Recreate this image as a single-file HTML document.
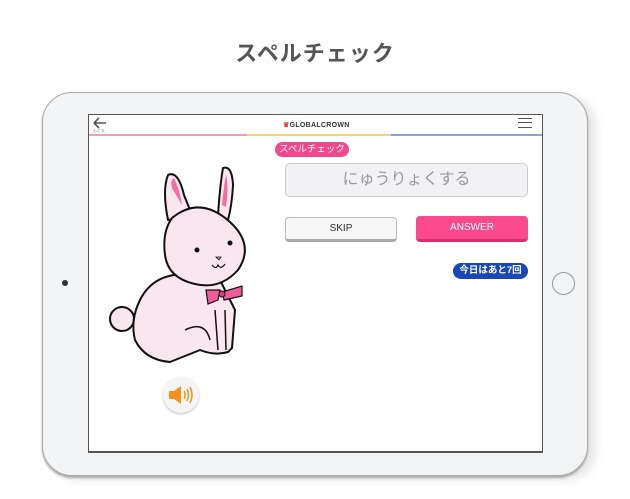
<!DOCTYPE html>
<html><head><meta charset="utf-8"><style>
*{margin:0;padding:0;box-sizing:border-box}
body{width:630px;height:499px;background:#fff;position:relative;overflow:hidden;font-family:"Liberation Sans","Noto Sans CJK JP",sans-serif}
.a{position:absolute}
</style></head><body>
<div class="a" style="left:0;top:36px;width:630px;text-align:center;font-size:22px;font-weight:bold;color:#555;letter-spacing:1px">スペルチェック</div>
<div class="a" style="left:42px;top:92px;width:546px;height:384px;border-radius:30px;background:#f3f4f6;border:1.5px solid #aaa;box-shadow:0 2px 2px #aaa, 8px 4px 10px rgba(0,0,0,.1)"></div>
<div class="a" style="left:62px;top:280px;width:6px;height:6px;border-radius:50%;background:#333"></div>
<div class="a" style="left:552px;top:272px;width:23px;height:23px;border-radius:50%;border:1.5px solid #999;background:#f3f4f6"></div>
<div class="a" style="left:88px;top:114px;width:455px;height:339px;background:#fff;border:1px solid #555;border-bottom:2px solid #555"></div>
<svg class="a" style="left:92px;top:117px" width="16" height="16"><path d="M2 6h12M2 6l5-5M2 6l5 5" stroke="#555" stroke-width="1.6" fill="none"/></svg>
<div class="a" style="left:93px;top:128px;font-size:4px;color:#888">もどる</div>
<div class="a" style="left:283px;top:121px;font-size:7px;font-weight:bold;color:#333;letter-spacing:.3px"><span style="color:#e33">♛</span>GLOBALCROWN</div>
<div class="a" style="left:518px;top:118px;width:14px;height:10px;border-top:1.5px solid #555;border-bottom:1.5px solid #555"><div style="margin-top:3px;border-top:1.5px solid #555"></div></div>
<div class="a" style="left:89px;top:134px;width:158px;height:2px;background:#f79ab9"></div>
<div class="a" style="left:247px;top:134px;width:144px;height:2px;background:#f9cf7a"></div>
<div class="a" style="left:391px;top:134px;width:151px;height:2px;background:#8aa3d8"></div>
<div class="a" style="left:275px;top:142px;width:74px;height:15px;border-radius:8px;background:#f0488a;color:#fff;font-size:9.5px;text-align:center;line-height:15px">スペルチェック</div>
<div class="a" style="left:285px;top:163px;width:243px;height:34px;border-radius:5px;background:#f2f2f4;border:1.5px solid #ccc;color:#999;font-size:16px;text-align:center;line-height:31px">にゅうりょくする</div>
<div class="a" style="left:285px;top:217px;width:112px;height:25px;border-radius:4px;background:#f7f7f7;border:1px solid #bbb;border-bottom:3px solid #aaa;font-size:10px;text-align:center;line-height:21px;color:#333">SKIP</div>
<div class="a" style="left:416px;top:216px;width:112px;height:26px;border-radius:4px;background:#fa4a8c;border-bottom:3px solid #d8306e;font-size:10px;text-align:center;line-height:24px;color:#fff">ANSWER</div>
<div class="a" style="left:453px;top:263px;width:75px;height:16px;border-radius:8px;background:#1a47b8;color:#fff;font-size:9.5px;font-weight:bold;text-align:center;line-height:16px">今日はあと7回</div>
<svg class="a" style="left:100px;top:160px" width="160" height="210" viewBox="0 0 160 210">
<g stroke="#111" stroke-width="2" fill="#fae6ef" stroke-linejoin="round">
<circle cx="22" cy="159" r="12"/>
<path d="M40 140 Q55 110 95 115 L120 120 L135 150 L132 188 L128 192 Q115 196 100 190 L70 202 Q45 200 35 180 Q30 160 40 140Z"/>
<path d="M68 60 Q62 30 68 15 Q78 10 84 35 L92 55Z"/>
<path d="M118 55 Q120 25 123 8 Q132 5 133 25 Q132 45 128 60Z"/>
<path d="M72 58 Q100 35 130 62 Q155 85 138 110 Q120 130 95 124 Q68 118 65 95 Q62 72 72 58Z"/>
</g>
<path d="M72 28 Q70 20 74 18 Q80 30 82 45Z" fill="#f06fa0"/>
<path d="M122 45 Q124 25 126 15 Q129 25 126 47Z" fill="#f06fa0"/>
<circle cx="97" cy="90" r="2.5" fill="#111"/><circle cx="130" cy="83" r="2.5" fill="#111"/>
<path d="M116 97l5 0-2 3z" fill="#f29ab5" stroke="#111" stroke-width=".8"/>
<path d="M112 105q4 5 6 0q3 5 7-1" stroke="#111" stroke-width="1.2" fill="none"/>
<path d="M106 130l14 0-2 10-10 4z M122 132l20-6 0 10-18 4z" fill="#ef5c9a" stroke="#111" stroke-width="1.2"/>
<circle cx="122" cy="134" r="3" fill="#e0407e" stroke="#111"/>
<path d="M85 170 Q105 160 110 180 M115 150 L118 190 M125 150 L126 190" stroke="#111" stroke-width="1.5" fill="none"/>
</svg>
<div class="a" style="left:163px;top:377px;width:36px;height:36px;border-radius:50%;background:#f5f5f5;box-shadow:0 1px 2px #bbb"></div>
<svg class="a" style="left:168px;top:385px" width="28" height="20" viewBox="0 0 28 20"><path d="M1 6h5l7-5v18l-7-5H1z" fill="#f7901e"/><path d="M16 6q2 4 0 8M19 4q3 6 0 12M22 2q4 8 0 16" stroke="#f7901e" stroke-width="1.5" fill="none"/></svg>
</body></html>
